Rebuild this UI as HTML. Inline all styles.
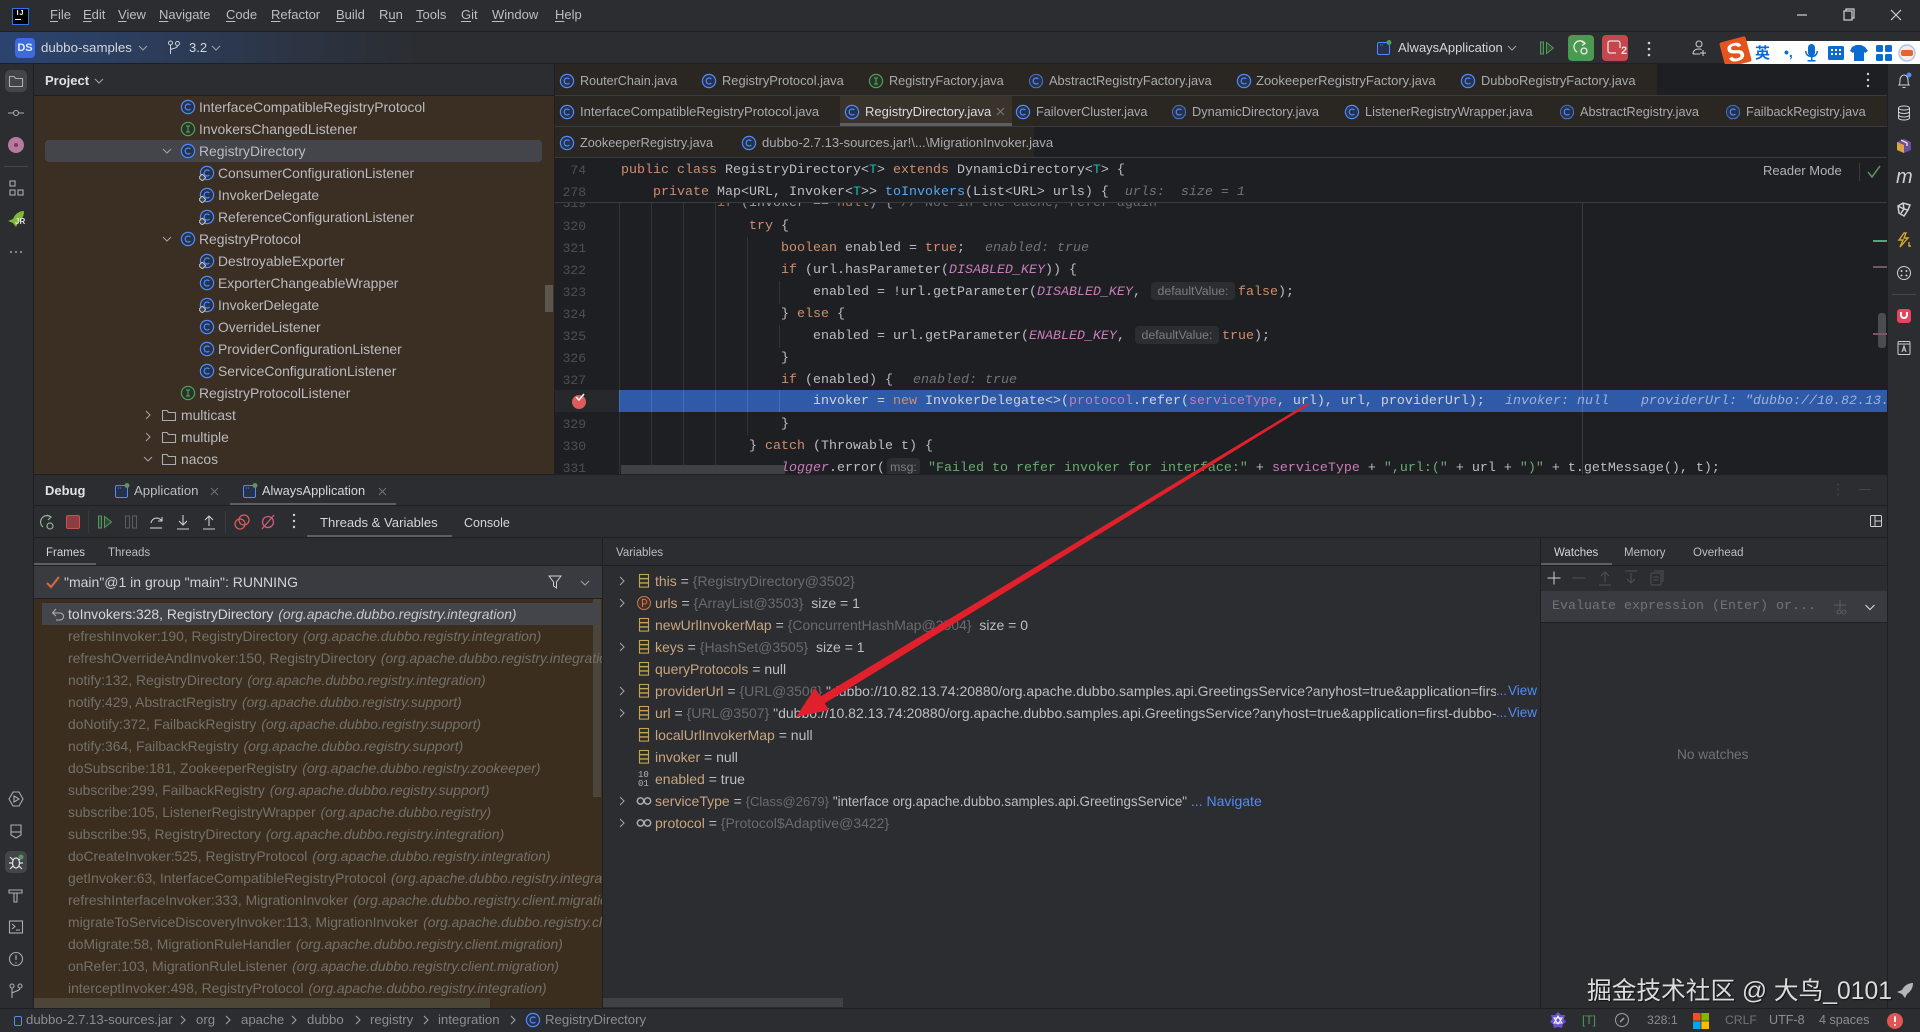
<!DOCTYPE html>
<html lang="en"><head><meta charset="utf-8"><title>dubbo-samples</title>
<style>
html,body{margin:0;padding:0;background:#2b2d30;}
#r{position:relative;width:1920px;height:1032px;overflow:hidden;background:#2b2d30;font-family:"Liberation Sans","Noto Sans CJK SC",sans-serif;font-size:13px;color:#bcbec4;}
.a{position:absolute;}
.t{position:absolute;white-space:pre;line-height:20px;height:20px;}
.m{position:absolute;white-space:pre;line-height:22px;height:22px;font-family:"Liberation Mono",monospace;font-size:13.33px;color:#bcbec4;margin-top:1px;}
.n{position:absolute;left:555px;width:31px;text-align:right;line-height:22px;height:22px;font-family:"Liberation Mono",monospace;font-size:13px;color:#4b5059;margin-top:1px;}
.g{position:absolute;top:203px;width:1px;height:271px;background:#313438;}
svg.i{position:absolute;width:16px;height:16px;overflow:visible;}
u{text-decoration:underline;text-underline-offset:2px;}
.k{color:#cf8e6d}.s{color:#6aab73}.p{color:#c77dbb}.pi{color:#c77dbb;font-style:italic}.f{color:#56a8f5}.h{color:#6f737a;font-style:italic}.tp{color:#16baac}
.tab{font-size:12.9px;color:#a9abb0;top:71px}
.tr{color:#b9bbc0;font-size:13.9px}
.fr{color:#747169;font-size:13.9px}.fr i{color:#747169;padding-left:1px}
.v{font-size:14px;color:#bcbec4}.v b{font-weight:normal;color:#c9a57f}.v em{font-style:normal;color:#686b72}
.lk{color:#548af7}
.inl{position:absolute;background:#2b2d30;border-radius:4px;color:#7a7d84;font-size:12.3px;line-height:18px;height:18px;text-align:center;white-space:pre;}
.b{color:#8b8d92;font-size:13.2px;top:1010px}
</style></head><body><div id="r">
<svg width="0" height="0" style="position:absolute"><defs>
<symbol id="c" viewBox="0 0 16 16"><circle cx="8" cy="8" r="6.6" fill="#25324d" stroke="#548af7" stroke-width="1.2"/><path d="M10.4 6a3 3 0 1 0 0 4" fill="none" stroke="#548af7" stroke-width="1.2"/></symbol>
<symbol id="cj" viewBox="0 0 16 16"><circle cx="8" cy="8" r="6.6" fill="#25324d" stroke="#548af7" stroke-width="1.2"/><path d="M10.4 6a3 3 0 1 0 0 4" fill="none" stroke="#548af7" stroke-width="1.2"/><rect x="0.8" y="10" width="5" height="5" rx="1" transform="rotate(45 3.3 12.5)" fill="#43454a" stroke="#ced0d6"/></symbol>
<symbol id="cg" viewBox="0 0 16 16"><path d="M3 4A6.6 6.6 0 0 1 14 5M14.6 8a6.6 6.6 0 0 1-12 4" fill="none" stroke="#548af7" stroke-width="1.2" stroke-dasharray="4 1.5"/><circle cx="8" cy="8" r="6.6" fill="#25324d" stroke="#4a6fb8" stroke-width="1"/><path d="M10.4 6a3 3 0 1 0 0 4" fill="none" stroke="#548af7" stroke-width="1.2"/></symbol>
<symbol id="ii" viewBox="0 0 16 16"><circle cx="8" cy="8" r="6.6" fill="#253627" stroke="#57965c" stroke-width="1.2"/><path d="M6 5h4M8 5v6M6 11h4" fill="none" stroke="#57965c" stroke-width="1.2"/></symbol>
<symbol id="fd" viewBox="0 0 16 16"><path d="M1.5 3.5h4.5l1.5 2h7v8h-13z" fill="none" stroke="#a8adb5" stroke-width="1.1"/></symbol>
<symbol id="cv" viewBox="0 0 16 16"><path d="M4 6l4 4 4-4" fill="none" stroke="#9da0a8" stroke-width="1.1"/></symbol>
<symbol id="cr" viewBox="0 0 16 16"><path d="M6 4l4 4-4 4" fill="none" stroke="#9da0a8" stroke-width="1.1"/></symbol>
<symbol id="fl" viewBox="0 0 16 16"><g fill="none" stroke="#c7a450" stroke-width="1.1"><rect x="3.5" y="1.5" width="9" height="4"/><rect x="3.5" y="5.8" width="9" height="4"/><rect x="3.5" y="10.1" width="9" height="4"/></g></symbol>
<symbol id="ob" viewBox="0 0 16 16"><g fill="none" stroke="#b0b3b9" stroke-width="1.4"><circle cx="4.5" cy="8" r="3.2"/><circle cx="11.5" cy="8" r="3.2"/></g></symbol>
<symbol id="run" viewBox="0 0 16 16"><rect x="1.5" y="2" width="3" height="12" fill="#2c4d33" stroke="#57965c"/><path d="M7.5 2.5v11l7-5.500z" fill="#2c4d33" stroke="#57965c"/></symbol>
<symbol id="app" viewBox="0 0 16 16"><rect x="1.500" y="2.500" width="12" height="12" rx="1.500" fill="#25324d" stroke="#548af7"/><path d="M4 5h1M6 5h1" stroke="#548af7"/><circle cx="13" cy="2.500" r="2.500" fill="#57965c"/></symbol>
</defs></svg>

<!-- title bar -->
<div class="a" style="left:0;top:31px;width:1920px;height:1px;background:#1e1f22"></div>
<div class="a" style="left:12px;top:8px;width:15px;height:15px;background:#000;border:1px solid #3574f0;color:#fff;font:bold 7px/9px 'Liberation Sans';text-align:center;box-sizing:content-box"><span style="letter-spacing:1px">IJ</span><div style="width:6px;height:1px;background:#fff;margin:1px 0 0 2px"></div></div>
<span class="t" style="left:50px;top:5px"><u>F</u>ile</span>
<span class="t" style="left:83px;top:5px"><u>E</u>dit</span>
<span class="t" style="left:118px;top:5px"><u>V</u>iew</span>
<span class="t" style="left:159px;top:5px"><u>N</u>avigate</span>
<span class="t" style="left:226px;top:5px"><u>C</u>ode</span>
<span class="t" style="left:271px;top:5px"><u>R</u>efactor</span>
<span class="t" style="left:336px;top:5px"><u>B</u>uild</span>
<span class="t" style="left:379px;top:5px">R<u>u</u>n</span>
<span class="t" style="left:416px;top:5px"><u>T</u>ools</span>
<span class="t" style="left:461px;top:5px"><u>G</u>it</span>
<span class="t" style="left:492px;top:5px"><u>W</u>indow</span>
<span class="t" style="left:555px;top:5px"><u>H</u>elp</span>
<svg class="a" style="left:1790px;top:5px" width="120" height="20"><g fill="none" stroke="#ced0d6" stroke-width="1.2"><path d="M7 10h10"/><rect x="54" y="6" width="8" height="9"/><path d="M56 6V4h8v9h-2"/><path d="M101 5l10 10M111 5l-10 10"/></g></svg>

<!-- toolbar -->
<div class="a" style="left:0;top:32px;width:1920px;height:32px;background:linear-gradient(90deg,#2b446f 0,#2c3e5e 130px,#2b2d30 420px)"></div>
<div class="a" style="left:0;top:63px;width:1920px;height:1px;background:#1e1f22"></div>
<div class="a" style="left:15px;top:38px;width:20px;height:20px;border-radius:4px;background:#3d6ae0;color:#e8ecf5;font:bold 11px/20px 'Liberation Sans';text-align:center">DS</div>
<span class="t" style="left:41px;top:38px;font-size:13.3px;color:#d4d6da">dubbo-samples</span>
<svg class="i" style="left:135px;top:40px"><use href="#cv"/></svg>
<svg class="i" style="left:166px;top:40px" viewBox="0 0 16 16"><g fill="none" stroke="#ced0d6"><circle cx="4.500" cy="3" r="2"/><circle cx="11.500" cy="3.500" r="2"/><path d="M4.500 5v9M11.500 5.500c0 3-5 3-7 4"/></g></svg>
<span class="t" style="left:189px;top:38px;color:#d4d6da">3.2</span>
<svg class="i" style="left:208px;top:40px"><use href="#cv"/></svg>
<svg class="i" style="left:1376px;top:40px"><use href="#app"/></svg>
<span class="t" style="left:1398px;top:38px;color:#d4d6da">AlwaysApplication</span>
<svg class="i" style="left:1504px;top:40px"><use href="#cv"/></svg>
<svg class="i" style="left:1539px;top:40px"><use href="#run"/></svg>
<div class="a" style="left:1568px;top:35px;width:26px;height:26px;border-radius:4px;background:#4a9a52"></div>
<svg class="i" style="left:1573px;top:40px" viewBox="0 0 16 16"><g fill="none" stroke="#e6efe6" stroke-width="1.300"><path d="M12 3.500A6 6 0 1 0 4 12"/><path d="M8 1l4 2.500-3 2"/><circle cx="11" cy="11" r="3"/></g></svg>
<div class="a" style="left:1602px;top:35px;width:26px;height:26px;border-radius:4px;background:#c4474d"></div>
<svg class="i" style="left:1607px;top:40px" viewBox="0 0 16 16"><rect x="1" y="1" width="12" height="12" rx="2" fill="none" stroke="#f0dcdc" stroke-width="1.300"/><rect x="9" y="8" width="8" height="9" fill="#c4474d"/></svg>
<span class="t" style="left:1621px;top:44px;font-size:11px;height:14px;line-height:14px;color:#f0e0e0;font-weight:bold">2</span>
<svg class="a" style="left:1645px;top:40px" width="8" height="18"><g fill="#ced0d6"><circle cx="4" cy="3" r="1.300"/><circle cx="4" cy="9" r="1.300"/><circle cx="4" cy="15" r="1.300"/></g></svg>
<svg class="i" style="left:1691px;top:40px" viewBox="0 0 16 16"><g fill="none" stroke="#ced0d6"><circle cx="8" cy="4" r="3"/><path d="M2 14c0-3 2-5 6-5 1 0 2 .2 2.500.6M2 14h7M12 10v6M9 13h6"/></g></svg>
<!-- IME -->
<div class="a" style="left:1740px;top:41px;width:180px;height:25px;background:#fff;border-radius:3px 0 0 3px"></div>
<div class="a" style="left:1722px;top:39px;width:27px;height:26px;background:#e5541d;transform:rotate(-15deg);border-radius:2px;color:#fff;font:bold 26px/26px 'Liberation Sans';text-align:center">S</div>
<span class="t" style="left:1755px;top:43px;color:#0b6bd0;font-size:15px;font-weight:bold;font-family:'Noto Sans CJK SC',sans-serif">英</span>
<span class="t" style="left:1784px;top:42px;color:#0b6bd0;font-size:14px;font-weight:bold">•,</span>
<svg class="a" style="left:1805px;top:44px" width="112" height="20"><g fill="#0b6bd0"><rect x="3" y="0" width="7" height="12" rx="3.500"/><path d="M0 7h1.500c0 3 2 4.500 5 4.500s5-1.500 5-4.500H13c0 4-2.500 6-5.500 6.200V16h3v1.500h-8V16h3.500v-2.800C3 13 0 11 0 7z"/><rect x="23" y="2" width="16" height="14" rx="1.500"/><path d="M47 3l4-2h5l4 2 3 4-3 2-1-1v9H49V8l-1 1-3-2z"/><rect x="71" y="1" width="7" height="7" rx="1.500"/><rect x="80" y="1" width="7" height="7" rx="1.500"/><rect x="71" y="10" width="7" height="7" rx="1.500"/><rect x="80" y="10" width="7" height="7" rx="1.500"/></g><g fill="#fff"><rect x="26" y="5" width="2" height="2"/><rect x="30" y="5" width="2" height="2"/><rect x="34" y="5" width="2" height="2"/><rect x="26" y="9" width="2" height="2"/><rect x="30" y="9" width="2" height="2"/><rect x="34" y="9" width="2" height="2"/></g><circle cx="102" cy="9" r="8" fill="#fde9e4" stroke="#a8c8ee" stroke-width="1.500"/><rect x="96" y="6" width="12" height="6" rx="2" fill="#e8622b"/></svg>

<!-- left stripe -->
<div class="a" style="left:33px;top:64px;width:1px;height:944px;background:#1e1f22"></div>
<div class="a" style="left:5px;top:70px;width:22px;height:22px;border-radius:5px;background:#43454a"></div>
<svg class="i" style="left:8px;top:73px"><use href="#fd"/></svg>
<svg class="i" style="left:8px;top:105px" viewBox="0 0 16 16"><g fill="none" stroke="#a8adb5" stroke-width="1.100"><circle cx="8" cy="8" r="2.500"/><path d="M0 8h5.500M10.500 8H16"/></g></svg>
<div class="a" style="left:8px;top:137px;width:16px;height:16px;border-radius:50%;background:#b57a9c"></div>
<div class="a" style="left:14px;top:143px;width:4px;height:4px;border-radius:50%;background:#7a3a5c"></div>
<div class="a" style="left:4px;top:166px;width:24px;height:1px;background:#43454a"></div>
<svg class="i" style="left:8px;top:180px" viewBox="0 0 16 16"><g fill="none" stroke="#a8adb5" stroke-width="1.100"><rect x="2" y="1" width="5" height="5"/><rect x="2" y="10" width="5" height="5"/><rect x="10" y="10" width="5" height="5"/></g></svg>
<svg class="a" style="left:7px;top:210px" width="20" height="20"><path d="M17 1c-5 0-9 3-11 8l-5 2 5 2 3 4 2-4c4-3 6-7 6-12z" fill="#7fb83b"/></svg>
<span class="t" style="left:15px;top:216px;font:bold 8px/12px 'Liberation Sans';height:12px;color:#e0e0e0">JR</span>
<svg class="a" style="left:9px;top:250px" width="14" height="4"><g fill="#8b8d92"><circle cx="2" cy="2" r="1.100"/><circle cx="7" cy="2" r="1.100"/><circle cx="12" cy="2" r="1.100"/></g></svg>
<svg class="i" style="left:8px;top:791px" viewBox="0 0 16 16"><g fill="none" stroke="#a8adb5" stroke-width="1.100"><path d="M5 1h6l4 7-4 7H5L1 8z"/><path d="M6 5l5 3-5 3z"/></g></svg>
<svg class="i" style="left:8px;top:823px" viewBox="0 0 16 16"><g fill="none" stroke="#a8adb5" stroke-width="1.100"><path d="M3 2h10v10l-5 3-5-3z"/><path d="M3 9h10"/></g></svg>
<div class="a" style="left:5px;top:851px;width:22px;height:22px;border-radius:5px;background:#43454a"></div>
<svg class="i" style="left:8px;top:854px" viewBox="0 0 16 16"><g fill="none" stroke="#dfe1e5" stroke-width="1.200"><ellipse cx="8" cy="9" rx="3.500" ry="5"/><path d="M1 9h3.500M11.500 9H15M2 3l3 3M14 3l-3 3M2 15l3-3M14 15l-3-3"/></g><circle cx="13" cy="3" r="2.500" fill="#57965c"/></svg>
<svg class="i" style="left:8px;top:887px" viewBox="0 0 16 16"><g fill="none" stroke="#a8adb5" stroke-width="1.100"><path d="M1 3h13v3H1zM6 6h3v9H6z"/></g></svg>
<svg class="i" style="left:8px;top:919px" viewBox="0 0 16 16"><g fill="none" stroke="#a8adb5" stroke-width="1.100"><rect x="1.500" y="2" width="13" height="12"/><path d="M4 5l3 2.500L4 10M8 11h4"/></g></svg>
<svg class="i" style="left:8px;top:951px" viewBox="0 0 16 16"><g fill="none" stroke="#a8adb5" stroke-width="1.100"><circle cx="8" cy="8" r="6.500"/><path d="M8 4v5M8 11v1.200"/></g></svg>
<svg class="i" style="left:8px;top:983px" viewBox="0 0 16 16"><g fill="none" stroke="#a8adb5" stroke-width="1.100"><circle cx="4" cy="3" r="2"/><circle cx="12" cy="3" r="2"/><path d="M4 5v10M12 5c0 3-5 3-8 5"/></g></svg>

<!-- project panel -->
<span class="t" style="left:45px;top:71px;font-weight:bold;color:#dfe1e5">Project</span>
<svg class="i" style="left:91px;top:73px"><use href="#cv"/></svg>
<div class="a" style="left:34px;top:95px;width:520px;height:1px;background:#1e1f22"></div>
<div class="a" style="left:34px;top:96px;width:520px;height:378px;background:#3b2e22;overflow:hidden">
  <div class="a" style="left:11px;top:44px;width:497px;height:22px;border-radius:4px;background:#43454a"></div>
  <div class="a" style="left:511px;top:189px;width:8px;height:27px;background:#5d564e"></div>
</div>
<svg class="i" style="left:180px;top:99px"><use href="#c"/></svg><span class="t tr" style="left:199px;top:97px">InterfaceCompatibleRegistryProtocol</span>
<svg class="i" style="left:180px;top:121px"><use href="#ii"/></svg><span class="t tr" style="left:199px;top:119px">InvokersChangedListener</span>
<svg class="i" style="left:159px;top:143px"><use href="#cv"/></svg><svg class="i" style="left:180px;top:143px"><use href="#c"/></svg><span class="t tr" style="left:199px;top:141px">RegistryDirectory</span>
<svg class="i" style="left:199px;top:165px"><use href="#cj"/></svg><span class="t tr" style="left:218px;top:163px">ConsumerConfigurationListener</span>
<svg class="i" style="left:199px;top:187px"><use href="#cj"/></svg><span class="t tr" style="left:218px;top:185px">InvokerDelegate</span>
<svg class="i" style="left:199px;top:209px"><use href="#cj"/></svg><span class="t tr" style="left:218px;top:207px">ReferenceConfigurationListener</span>
<svg class="i" style="left:159px;top:231px"><use href="#cv"/></svg><svg class="i" style="left:180px;top:231px"><use href="#c"/></svg><span class="t tr" style="left:199px;top:229px">RegistryProtocol</span>
<svg class="i" style="left:199px;top:253px"><use href="#cj"/></svg><span class="t tr" style="left:218px;top:251px">DestroyableExporter</span>
<svg class="i" style="left:199px;top:275px"><use href="#c"/></svg><span class="t tr" style="left:218px;top:273px">ExporterChangeableWrapper</span>
<svg class="i" style="left:199px;top:297px"><use href="#cj"/></svg><span class="t tr" style="left:218px;top:295px">InvokerDelegate</span>
<svg class="i" style="left:199px;top:319px"><use href="#c"/></svg><span class="t tr" style="left:218px;top:317px">OverrideListener</span>
<svg class="i" style="left:199px;top:341px"><use href="#c"/></svg><span class="t tr" style="left:218px;top:339px">ProviderConfigurationListener</span>
<svg class="i" style="left:199px;top:363px"><use href="#c"/></svg><span class="t tr" style="left:218px;top:361px">ServiceConfigurationListener</span>
<svg class="i" style="left:180px;top:385px"><use href="#ii"/></svg><span class="t tr" style="left:199px;top:383px">RegistryProtocolListener</span>
<svg class="i" style="left:140px;top:407px"><use href="#cr"/></svg><svg class="i" style="left:161px;top:407px"><use href="#fd"/></svg><span class="t tr" style="left:181px;top:405px">multicast</span>
<svg class="i" style="left:140px;top:429px"><use href="#cr"/></svg><svg class="i" style="left:161px;top:429px"><use href="#fd"/></svg><span class="t tr" style="left:181px;top:427px">multiple</span>
<svg class="i" style="left:140px;top:451px"><use href="#cv"/></svg><svg class="i" style="left:161px;top:451px"><use href="#fd"/></svg><span class="t tr" style="left:181px;top:449px">nacos</span>

<!-- editor tabs -->
<div class="a" style="left:554px;top:64px;width:1px;height:410px;background:#1e1f22"></div>
<div class="a" style="left:555px;top:64px;width:1332px;height:94px;background:#1e1f22"></div>
<div class="a" style="left:555px;top:64px;width:1102px;height:31px;background:#2a2622"></div>
<div class="a" style="left:555px;top:96px;width:1332px;height:30px;background:#2a2622"></div>
<div class="a" style="left:555px;top:127px;width:479px;height:30px;background:#2a2622"></div>
<div class="a" style="left:555px;top:95px;width:1332px;height:1px;background:#393b40"></div>
<div class="a" style="left:555px;top:126px;width:1332px;height:1px;background:#393b40"></div>
<div class="a" style="left:555px;top:157px;width:1332px;height:1px;background:#393b40"></div>
<div class="a" style="left:840px;top:96px;width:172px;height:30px;background:#39332c"></div>
<div class="a" style="left:840px;top:123px;width:172px;height:3px;background:#5d5f63"></div>
<svg class="i" style="left:559px;top:73px"><use href="#c"/></svg><span class="t tab" style="left:580px;font-size:12.6px">RouterChain.java</span>
<svg class="i" style="left:701px;top:73px"><use href="#c"/></svg><span class="t tab" style="left:722px">RegistryProtocol.java</span>
<svg class="i" style="left:868px;top:73px"><use href="#ii"/></svg><span class="t tab" style="left:889px;font-size:12.7px">RegistryFactory.java</span>
<svg class="i" style="left:1028px;top:73px"><use href="#cg"/></svg><span class="t tab" style="left:1049px;font-size:12.8px">AbstractRegistryFactory.java</span>
<svg class="i" style="left:1236px;top:73px"><use href="#c"/></svg><span class="t tab" style="left:1256px;font-size:13px">ZookeeperRegistryFactory.java</span>
<svg class="i" style="left:1460px;top:73px"><use href="#c"/></svg><span class="t tab" style="left:1481px">DubboRegistryFactory.java</span>
<svg class="a" style="left:1864px;top:71px" width="8" height="18"><g fill="#ced0d6"><circle cx="4" cy="3" r="1.200"/><circle cx="4" cy="9" r="1.200"/><circle cx="4" cy="15" r="1.200"/></g></svg>
<svg class="i" style="left:559px;top:104px"><use href="#c"/></svg><span class="t tab" style="left:580px;top:102px;font-size:13px">InterfaceCompatibleRegistryProtocol.java</span>
<svg class="i" style="left:844px;top:104px"><use href="#c"/></svg><span class="t tab" style="left:865px;top:102px;color:#d9dbe0;font-size:13px">RegistryDirectory.java</span>
<svg class="a" style="left:996px;top:107px" width="9" height="9"><path d="M1 1l7 7M8 1l-7 7" stroke="#7a7c82"/></svg>
<svg class="i" style="left:1015px;top:104px"><use href="#c"/></svg><span class="t tab" style="left:1036px;top:102px;font-size:12.7px">FailoverCluster.java</span>
<svg class="i" style="left:1171px;top:104px"><use href="#cg"/></svg><span class="t tab" style="left:1192px;top:102px;font-size:12.8px">DynamicDirectory.java</span>
<svg class="i" style="left:1344px;top:104px"><use href="#c"/></svg><span class="t tab" style="left:1365px;top:102px;font-size:12.8px">ListenerRegistryWrapper.java</span>
<svg class="i" style="left:1559px;top:104px"><use href="#cg"/></svg><span class="t tab" style="left:1580px;top:102px;font-size:12.7px">AbstractRegistry.java</span>
<svg class="i" style="left:1725px;top:104px"><use href="#cg"/></svg><span class="t tab" style="left:1746px;top:102px;font-size:12.7px">FailbackRegistry.java</span>
<svg class="i" style="left:559px;top:135px"><use href="#c"/></svg><span class="t tab" style="left:580px;top:133px;font-size:12.7px">ZookeeperRegistry.java</span>
<svg class="i" style="left:741px;top:135px"><use href="#c"/></svg><span class="t tab" style="left:762px;top:133px;font-size:13.1px">dubbo-2.7.13-sources.jar!\...\MigrationInvoker.java</span>

<!-- editor -->
<div class="a" style="left:555px;top:158px;width:1332px;height:316px;background:#1e1f22"></div>
<div class="a" style="left:555px;top:202px;width:1332px;height:1px;background:#393b40"></div>
<div class="g" style="left:619px"></div><div class="g" style="left:651px"></div><div class="g" style="left:683px"></div><div class="g" style="left:715px"></div>
<div class="a" style="left:747px;top:237px;width:1px;height:198px;background:#313438"></div>
<div class="a" style="left:779px;top:281px;width:1px;height:23px;background:#313438"></div>
<div class="a" style="left:779px;top:325px;width:1px;height:23px;background:#313438"></div>
<div class="a" style="left:1582px;top:203px;width:1px;height:271px;background:#393b40"></div>
<div class="a" style="left:619px;top:390px;width:1268px;height:22px;background:#2f5aa8"></div>
<div class="a" style="left:619px;top:390px;width:1px;height:22px;background:#4a6fb0"></div><div class="a" style="left:651px;top:390px;width:1px;height:22px;background:#4a6fb0"></div><div class="a" style="left:683px;top:390px;width:1px;height:22px;background:#4a6fb0"></div><div class="a" style="left:715px;top:390px;width:1px;height:22px;background:#4a6fb0"></div><div class="a" style="left:747px;top:390px;width:1px;height:22px;background:#4a6fb0"></div><div class="a" style="left:779px;top:390px;width:1px;height:22px;background:#4a6fb0"></div><div class="a" style="left:1582px;top:390px;width:1px;height:22px;background:#4a6fb0"></div>
<div class="a" style="left:555px;top:390px;width:64px;height:22px;background:#26282c"></div>

<span class="n" style="top:159px">74</span>
<span class="m" style="left:621px;top:159px"><span class="k">public class</span> RegistryDirectory&lt;<span class="tp">T</span>&gt; <span class="k">extends</span> DynamicDirectory&lt;<span class="tp">T</span>&gt; {</span>
<span class="n" style="top:181px">278</span>
<span class="m" style="left:653px;top:181px"><span class="k">private</span> Map&lt;URL, Invoker&lt;<span class="tp">T</span>&gt;&gt; <span class="f">toInvokers</span>(List&lt;URL&gt; urls) {  <span class="h">urls:  size = 1</span></span>

<div class="a" style="left:555px;top:203px;width:1332px;height:271px;overflow:hidden">
  <span class="n" style="left:0;top:-11px">319</span>
  <span class="m" style="left:162px;top:-11px;opacity:.8"><span class="k">if</span> (invoker == <span class="k">null</span>) { <span style="color:#7a7e85">// Not in the cache, refer again</span></span>
</div>
<span class="n" style="top:215px">320</span><span class="m" style="left:749px;top:215px"><span class="k">try</span> {</span>
<span class="n" style="top:237px">321</span><span class="m" style="left:781px;top:237px"><span class="k">boolean</span> enabled = <span class="k">true</span>;</span><span class="m h" style="left:985px;top:237px;color:#6f737a">enabled: true</span>
<span class="n" style="top:259px">322</span><span class="m" style="left:781px;top:259px"><span class="k">if</span> (url.hasParameter(<span class="pi">DISABLED_KEY</span>)) {</span>
<span class="n" style="top:281px">323</span><span class="m" style="left:813px;top:281px">enabled = !url.getParameter(<span class="pi">DISABLED_KEY</span>,</span><span class="inl" style="left:1151px;top:282px;width:84px">defaultValue:</span><span class="m k" style="left:1238px;top:281px;color:#cf8e6d">false<span style="color:#bcbec4">);</span></span>
<span class="n" style="top:303px">324</span><span class="m" style="left:781px;top:303px">} <span class="k">else</span> {</span>
<span class="n" style="top:325px">325</span><span class="m" style="left:813px;top:325px">enabled = url.getParameter(<span class="pi">ENABLED_KEY</span>,</span><span class="inl" style="left:1135px;top:326px;width:84px">defaultValue:</span><span class="m" style="left:1222px;top:325px"><span class="k">true</span>);</span>
<span class="n" style="top:347px">326</span><span class="m" style="left:781px;top:347px">}</span>
<span class="n" style="top:369px">327</span><span class="m" style="left:781px;top:369px"><span class="k">if</span> (enabled) {</span><span class="m h" style="left:913px;top:369px;color:#6f737a">enabled: true</span>
<svg class="a" style="left:571px;top:392px" width="18" height="18"><circle cx="8" cy="10" r="7" fill="#db5c5c"/><path d="M5 5l3 3 5-6" fill="none" stroke="#fff" stroke-width="1.500"/></svg>
<div class="a" style="left:619px;top:390px;width:1268px;height:22px;overflow:hidden">
  <span class="m" style="left:194px;top:0"><span style="color:#d0d3d8">invoker = </span><span class="k">new</span> <span style="color:#d0d3d8">InvokerDelegate&lt;&gt;(</span><span class="p">protocol</span><span style="color:#d0d3d8">.refer(</span><span class="p">serviceType</span><span style="color:#d0d3d8">, url), url, providerUrl);</span></span>
  <span class="m" style="left:886px;top:0;color:#9db3d8;font-style:italic">invoker: null</span>
  <span class="m" style="left:1022px;top:0;color:#9db3d8;font-style:italic">providerUrl: "dubbo://10.82.13.</span>
</div>
<span class="n" style="top:413px">329</span><span class="m" style="left:781px;top:413px">}</span>
<span class="n" style="top:435px">330</span><span class="m" style="left:749px;top:435px">} <span class="k">catch</span> (Throwable t) {</span>
<div class="a" style="left:621px;top:465px;width:164px;height:9px;background:#3f4144"></div>
<span class="n" style="top:457px">331</span><span class="m" style="left:781px;top:457px"><span class="pi">logger</span>.error(</span><span class="inl" style="left:887px;top:458px;width:33px">msg:</span><span class="m" style="left:928px;top:457px"><span class="s">"Failed to refer invoker for interface:"</span> + <span class="p">serviceType</span> + <span class="s">",url:("</span> + url + <span class="s">")"</span> + t.getMessage(), t);</span>

<span class="t" style="left:1763px;top:161px;color:#b0b2b8;font-size:13px">Reader Mode</span>
<div class="a" style="left:1859px;top:163px;width:1px;height:18px;background:#393b40"></div>
<svg class="i" style="left:1866px;top:164px" viewBox="0 0 16 16"><path d="M2 8l4 5 8-11" fill="none" stroke="#57965c" stroke-width="1.500"/></svg>
<div class="a" style="left:1873px;top:240px;width:14px;height:2px;background:#4eaa7a"></div>
<div class="a" style="left:1873px;top:266px;width:14px;height:2px;background:#6e5a64"></div>
<div class="a" style="left:1878px;top:313px;width:8px;height:35px;background:#4a4c50;border-radius:3px"></div>
<div class="a" style="left:1873px;top:333px;width:14px;height:2px;background:#7a5a60"></div>

<!-- right stripe -->
<div class="a" style="left:1887px;top:64px;width:33px;height:944px;background:#2b2d30;border-left:1px solid #1e1f22;box-sizing:border-box"></div>
<svg class="i" style="left:1896px;top:73px" viewBox="0 0 16 16"><g fill="none" stroke="#ced0d6"><path d="M3 12c1-1 1-3 1-5 0-3 2-5 4-5s4 2 4 5c0 2 0 4 1 5zM6.500 14.500h3"/></g><circle cx="13" cy="2" r="2.500" fill="#548af7"/></svg>
<svg class="i" style="left:1896px;top:105px" viewBox="0 0 16 16"><g fill="none" stroke="#ced0d6"><ellipse cx="8" cy="3" rx="5.500" ry="2"/><path d="M2.500 3v10c0 1 2.500 2 5.500 2s5.500-1 5.500-2V3M2.500 6.500c0 1 2.500 2 5.500 2s5.500-1 5.500-2M2.500 10c0 1 2.500 2 5.500 2s5.500-1 5.500-2"/></g></svg>
<svg class="i" style="left:1896px;top:137px" viewBox="0 0 16 16"><path d="M1 5l7-3 7 3v8l-7 3-7-3z" fill="#6a4fa0"/><path d="M1 5l7 3v8l-7-3z" fill="#d9a441"/><path d="M5 3l6 3v3" stroke="#e0d8c8" fill="none" stroke-width="1.500"/></svg>
<span class="t" style="left:1896px;top:167px;font:italic 20px/20px 'Liberation Sans';color:#ced0d6">m</span>
<svg class="i" style="left:1896px;top:201px" viewBox="0 0 16 16"><g fill="none" stroke="#ced0d6" stroke-width="1.500"><path d="M2 5l5-3 7 2-2 5-4 6-5-3z"/><path d="M7 2l1 6 4 1M2 5l6 3-3 4"/></g></svg>
<svg class="i" style="left:1896px;top:232px" viewBox="0 0 16 16"><g fill="none" stroke="#d4a72c" stroke-width="1.400"><path d="M8 1L3 8h4l-3 7 8-9H8l2-5zM13 10v4h2"/></g></svg>
<svg class="i" style="left:1896px;top:265px" viewBox="0 0 16 16"><circle cx="8" cy="8" r="6.500" fill="none" stroke="#ced0d6"/><g fill="#ced0d6"><circle cx="5.500" cy="6" r="1"/><circle cx="10.500" cy="6" r="1"/><circle cx="5.500" cy="10.500" r="1"/><circle cx="10.500" cy="10.500" r="1"/></g></svg>
<div class="a" style="left:1892px;top:294px;width:24px;height:1px;background:#43454a"></div>
<div class="a" style="left:1897px;top:309px;width:14px;height:14px;background:#e8435f;border-radius:3px"></div>
<svg class="a" style="left:1899px;top:311px" width="10" height="10"><path d="M2 1v3a3 3 0 0 0 6 0V1" fill="none" stroke="#fff" stroke-width="2"/></svg>
<svg class="i" style="left:1896px;top:340px" viewBox="0 0 16 16"><g fill="none" stroke="#ced0d6"><rect x="2" y="1.500" width="12" height="13" rx="1"/><path d="M2 4h12"/><path d="M6 12l2-6 2 6M6.800 10h2.400"/></g></svg>

<!-- debug panel -->
<div class="a" style="left:34px;top:474px;width:1853px;height:1px;background:#1e1f22"></div>
<span class="t" style="left:45px;top:481px;font-weight:bold;color:#dfe1e5">Debug</span>
<svg class="i" style="left:114px;top:483px"><use href="#app"/></svg><span class="t" style="left:134px;top:481px;font-size:13.2px">Application</span>
<svg class="a" style="left:210px;top:487px" width="9" height="9"><path d="M1 1l7 7M8 1l-7 7" stroke="#6f737a"/></svg>
<svg class="i" style="left:242px;top:483px"><use href="#app"/></svg><span class="t" style="left:262px;top:481px;font-size:12.8px;color:#d4d6da">AlwaysApplication</span>
<svg class="a" style="left:378px;top:487px" width="9" height="9"><path d="M1 1l7 7M8 1l-7 7" stroke="#6f737a"/></svg>
<div class="a" style="left:230px;top:503px;width:166px;height:2px;background:#5d5f63"></div>
<div class="a" style="left:34px;top:505px;width:1853px;height:1px;background:#1e1f22"></div>
<svg class="a" style="left:1835px;top:483px" width="50" height="14"><g fill="#43454a"><circle cx="3" cy="1.500" r="1"/><circle cx="3" cy="6.500" r="1"/><circle cx="3" cy="11.500" r="1"/><rect x="24" y="6" width="12" height="1"/></g></svg>
<svg class="i" style="left:39px;top:514px" viewBox="0 0 16 16"><g fill="none" stroke="#8fb58f" stroke-width="1.200"><path d="M12 3A6 6 0 1 0 4 13"/><path d="M8 1l4 2-3 3"/><circle cx="11" cy="12" r="3"/></g></svg>
<div class="a" style="left:66px;top:515px;width:12px;height:12px;background:#8c3d40;border:1px solid #c75450;border-radius:2px"></div>
<div class="a" style="left:88px;top:511px;width:1px;height:22px;background:#393b40"></div>
<svg class="i" style="left:97px;top:514px"><use href="#run"/></svg>
<svg class="i" style="left:123px;top:514px" viewBox="0 0 16 16"><g fill="none" stroke="#5a5d63"><rect x="2.500" y="2" width="4" height="12"/><rect x="9.500" y="2" width="4" height="12"/></g></svg>
<svg class="i" style="left:149px;top:514px" viewBox="0 0 16 16"><g fill="none" stroke="#ced0d6" stroke-width="1.100"><path d="M2 9c1-5 7-7 11-2M13 3v4h-4"/><path d="M1 14h12"/></g></svg>
<svg class="i" style="left:175px;top:514px" viewBox="0 0 16 16"><g fill="none" stroke="#ced0d6" stroke-width="1.100"><path d="M8 1v10M4 7l4 4 4-4M2 15h12"/></g></svg>
<svg class="i" style="left:201px;top:514px" viewBox="0 0 16 16"><g fill="none" stroke="#ced0d6" stroke-width="1.100"><path d="M8 12V2M4 6l4-4 4 4M2 15h12"/></g></svg>
<div class="a" style="left:225px;top:511px;width:1px;height:22px;background:#393b40"></div>
<svg class="i" style="left:234px;top:514px" viewBox="0 0 16 16"><g fill="none" stroke="#db5c5c" stroke-width="1.300"><circle cx="6" cy="10" r="5"/><circle cx="10" cy="6" r="5"/></g></svg>
<svg class="i" style="left:260px;top:514px" viewBox="0 0 16 16"><g fill="none" stroke="#c75c8e" stroke-width="1.300"><circle cx="8" cy="8" r="5.500"/><path d="M2 15L14 1" stroke="#db5c5c"/></g></svg>
<svg class="a" style="left:290px;top:513px" width="8" height="16"><g fill="#ced0d6"><circle cx="4" cy="2" r="1.200"/><circle cx="4" cy="8" r="1.200"/><circle cx="4" cy="14" r="1.200"/></g></svg>
<span class="t" style="left:320px;top:513px;color:#d4d6da;font-size:13.1px">Threads &amp; Variables</span>
<div class="a" style="left:307px;top:535px;width:145px;height:2px;background:#5d5f63"></div>
<span class="t" style="left:464px;top:513px;font-size:12.5px;color:#d4d6da">Console</span>
<svg class="i" style="left:1868px;top:513px" viewBox="0 0 16 16"><g fill="none" stroke="#ced0d6"><rect x="2.500" y="2.500" width="11" height="11" rx="1"/><path d="M7 2.500v11M7 8h6.500"/></g></svg>
<div class="a" style="left:34px;top:537px;width:1853px;height:1px;background:#1e1f22"></div>

<!-- frames -->
<div class="a" style="left:602px;top:538px;width:1px;height:470px;background:#1e1f22"></div>
<span class="t" style="left:46px;top:543px;font-size:11.500px;color:#d4d6da">Frames</span>
<span class="t" style="left:108px;top:543px;font-size:11.500px">Threads</span>
<div class="a" style="left:34px;top:563px;width:62px;height:2px;background:#5d5f63"></div>
<div class="a" style="left:34px;top:565px;width:568px;height:1px;background:#1e1f22"></div>
<div class="a" style="left:34px;top:566px;width:568px;height:32px;background:#393b40"></div>
<div class="a" style="left:34px;top:598px;width:568px;height:1px;background:#1e1f22"></div>
<svg class="i" style="left:45px;top:574px" viewBox="0 0 16 16"><path d="M2 9l4 4 8-10" fill="none" stroke="#d0693d" stroke-width="2.200"/></svg>
<span class="t" style="left:64px;top:572px;font-size:14px;color:#d0d2d6">"main"@1 in group "main": RUNNING</span>
<svg class="i" style="left:547px;top:574px" viewBox="0 0 16 16"><path d="M2 2h12L9.500 8v6l-3-2V8z" fill="none" stroke="#ced0d6"/></svg>
<svg class="i" style="left:577px;top:575px"><use href="#cv"/></svg>

<div class="a" style="left:34px;top:599px;width:568px;height:409px;background:#3b2e1f;overflow:hidden">
  <div class="a" style="left:559px;top:0;width:8px;height:198px;background:#4a463c"></div>
  <div class="a" style="left:8px;top:4px;width:558px;height:22px;background:#43454a"></div>
  <div class="a" style="left:0;top:399px;width:456px;height:10px;background:#4d4638"></div>
</div>
<div class="a" style="left:34px;top:599px;width:568px;height:399px;overflow:hidden">
<svg class="i" style="left:16px;top:7px" viewBox="0 0 16 16"><path d="M3 7h7a3.500 3.500 0 0 1 0 7H6M6 3L2.500 7 6 10" fill="none" stroke="#b0b2b8"/></svg>
<span class="t" style="left:34px;top:5px;color:#d4d6da;font-size:13.9px">toInvokers:328, RegistryDirectory <i style="color:#c6c8cd;padding-left:1px">(org.apache.dubbo.registry.integration)</i></span>
<span class="t fr" style="left:34px;top:27px">refreshInvoker:190, RegistryDirectory <i>(org.apache.dubbo.registry.integration)</i></span>
<span class="t fr" style="left:34px;top:49px">refreshOverrideAndInvoker:150, RegistryDirectory <i>(org.apache.dubbo.registry.integration)</i></span>
<span class="t fr" style="left:34px;top:71px">notify:132, RegistryDirectory <i>(org.apache.dubbo.registry.integration)</i></span>
<span class="t fr" style="left:34px;top:93px">notify:429, AbstractRegistry <i>(org.apache.dubbo.registry.support)</i></span>
<span class="t fr" style="left:34px;top:115px">doNotify:372, FailbackRegistry <i>(org.apache.dubbo.registry.support)</i></span>
<span class="t fr" style="left:34px;top:137px">notify:364, FailbackRegistry <i>(org.apache.dubbo.registry.support)</i></span>
<span class="t fr" style="left:34px;top:159px">doSubscribe:181, ZookeeperRegistry <i>(org.apache.dubbo.registry.zookeeper)</i></span>
<span class="t fr" style="left:34px;top:181px">subscribe:299, FailbackRegistry <i>(org.apache.dubbo.registry.support)</i></span>
<span class="t fr" style="left:34px;top:203px">subscribe:105, ListenerRegistryWrapper <i>(org.apache.dubbo.registry)</i></span>
<span class="t fr" style="left:34px;top:225px">subscribe:95, RegistryDirectory <i>(org.apache.dubbo.registry.integration)</i></span>
<span class="t fr" style="left:34px;top:247px">doCreateInvoker:525, RegistryProtocol <i>(org.apache.dubbo.registry.integration)</i></span>
<span class="t fr" style="left:34px;top:269px">getInvoker:63, InterfaceCompatibleRegistryProtocol <i>(org.apache.dubbo.registry.integration)</i></span>
<span class="t fr" style="left:34px;top:291px">refreshInterfaceInvoker:333, MigrationInvoker <i>(org.apache.dubbo.registry.client.migration)</i></span>
<span class="t fr" style="left:34px;top:313px">migrateToServiceDiscoveryInvoker:113, MigrationInvoker <i>(org.apache.dubbo.registry.client.migration)</i></span>
<span class="t fr" style="left:34px;top:335px">doMigrate:58, MigrationRuleHandler <i>(org.apache.dubbo.registry.client.migration)</i></span>
<span class="t fr" style="left:34px;top:357px">onRefer:103, MigrationRuleListener <i>(org.apache.dubbo.registry.client.migration)</i></span>
<span class="t fr" style="left:34px;top:379px">interceptInvoker:498, RegistryProtocol <i>(org.apache.dubbo.registry.integration)</i></span>
</div>
<div class="a" style="left:603px;top:998px;width:240px;height:9px;background:#3f4144"></div>

<!-- variables -->
<span class="t" style="left:616px;top:543px;font-size:11.500px">Variables</span>
<div class="a" style="left:603px;top:565px;width:937px;height:1px;background:#1e1f22"></div>
<svg class="i" style="left:614px;top:573px"><use href="#cr"/></svg><svg class="i" style="left:636px;top:573px"><use href="#fl"/></svg>
<span class="t v" style="left:655px;top:571px"><b>this</b> = <em>{RegistryDirectory@3502}</em></span>
<svg class="i" style="left:614px;top:595px"><use href="#cr"/></svg><svg class="i" style="left:636px;top:595px" viewBox="0 0 16 16"><circle cx="8" cy="8" r="6.500" fill="#4a2f24" stroke="#c77b50"/><path d="M6.500 12V4.500h2a2 2 0 0 1 0 4.500h-2" fill="none" stroke="#c77b50"/></svg>
<span class="t v" style="left:655px;top:593px"><b>urls</b> = <em>{ArrayList@3503}</em>  size = 1</span>
<svg class="i" style="left:636px;top:617px"><use href="#fl"/></svg>
<span class="t v" style="left:655px;top:615px"><b>newUrlInvokerMap</b> = <em>{ConcurrentHashMap@3504}</em>  size = 0</span>
<svg class="i" style="left:614px;top:639px"><use href="#cr"/></svg><svg class="i" style="left:636px;top:639px"><use href="#fl"/></svg>
<span class="t v" style="left:655px;top:637px"><b>keys</b> = <em>{HashSet@3505}</em>  size = 1</span>
<svg class="i" style="left:636px;top:661px"><use href="#fl"/></svg>
<span class="t v" style="left:655px;top:659px"><b>queryProtocols</b> = null</span>
<svg class="i" style="left:614px;top:683px"><use href="#cr"/></svg><svg class="i" style="left:636px;top:683px"><use href="#fl"/></svg>
<div class="a" style="left:655px;top:681px;width:841px;height:22px;overflow:hidden"><span class="t v" style="left:0;top:0"><b>providerUrl</b> = <em>{URL@3506}</em> "dubbo://10.82.13.74:20880/org.apache.dubbo.samples.api.GreetingsService?anyhost=true&amp;application=firs</span></div>
<span class="t lk" style="left:1496px;top:681px">...</span><span class="t lk" style="left:1508px;top:681px;font-size:13.5px">View</span>
<svg class="i" style="left:614px;top:705px"><use href="#cr"/></svg><svg class="i" style="left:636px;top:705px"><use href="#fl"/></svg>
<div class="a" style="left:655px;top:703px;width:841px;height:22px;overflow:hidden"><span class="t v" style="left:0;top:0"><b>url</b> = <em>{URL@3507}</em> "dubbo://10.82.13.74:20880/org.apache.dubbo.samples.api.GreetingsService?anyhost=true&amp;application=first-dubbo-</span></div>
<span class="t lk" style="left:1496px;top:703px">...</span><span class="t lk" style="left:1508px;top:703px;font-size:13.5px">View</span>
<svg class="i" style="left:636px;top:727px"><use href="#fl"/></svg>
<span class="t v" style="left:655px;top:725px"><b>localUrlInvokerMap</b> = null</span>
<svg class="i" style="left:636px;top:749px"><use href="#fl"/></svg>
<span class="t v" style="left:655px;top:747px"><b>invoker</b> = null</span>
<span class="a" style="left:638px;top:771px;font:9px/9px 'Liberation Mono',monospace;color:#b0b2b8;letter-spacing:0">10<br>01</span>
<span class="t v" style="left:655px;top:769px"><b>enabled</b> = true</span>
<svg class="i" style="left:614px;top:793px"><use href="#cr"/></svg><svg class="i" style="left:636px;top:793px"><use href="#ob"/></svg>
<span class="t v" style="left:655px;top:791px"><b>serviceType</b> = <em style="font-size:13px">{Class@2679}</em> <span style="font-size:13.4px">"interface org.apache.dubbo.samples.api.GreetingsService"</span> <span class="lk">... Navigate</span></span>
<svg class="i" style="left:614px;top:815px"><use href="#cr"/></svg><svg class="i" style="left:636px;top:815px"><use href="#ob"/></svg>
<span class="t v" style="left:655px;top:813px"><b>protocol</b> = <em>{Protocol$Adaptive@3422}</em></span>

<!-- watches -->
<div class="a" style="left:1540px;top:538px;width:1px;height:470px;background:#1e1f22"></div>
<span class="t" style="left:1554px;top:543px;font-size:11.500px;color:#d4d6da">Watches</span>
<span class="t" style="left:1624px;top:543px;font-size:11.500px">Memory</span>
<span class="t" style="left:1693px;top:543px;font-size:11.500px">Overhead</span>
<div class="a" style="left:1541px;top:563px;width:71px;height:2px;background:#5d5f63"></div>
<div class="a" style="left:1541px;top:565px;width:346px;height:1px;background:#1e1f22"></div>
<svg class="i" style="left:1546px;top:570px" viewBox="0 0 16 16"><path d="M8 1.500v13M1.500 8h13" stroke="#ced0d6" fill="none"/></svg>
<svg class="i" style="left:1571px;top:570px" viewBox="0 0 16 16"><path d="M1.500 8h13" stroke="#4e5157" fill="none"/></svg>
<svg class="i" style="left:1597px;top:570px" viewBox="0 0 16 16"><path d="M8 12V2M4 6l4-4 4 4M2 15h12" stroke="#4e5157" fill="none"/></svg>
<svg class="i" style="left:1623px;top:570px" viewBox="0 0 16 16"><path d="M8 3v10M4 9l4 4 4-4M2 1h12" stroke="#4e5157" fill="none"/></svg>
<svg class="i" style="left:1649px;top:570px" viewBox="0 0 16 16"><g stroke="#4e5157" fill="none"><rect x="2" y="3" width="10" height="12" rx="1"/><path d="M5 1h9v11M4.500 7h5M4.500 10h5"/></g></svg>
<div class="a" style="left:1541px;top:591px;width:346px;height:32px;background:#393b40;border-bottom:1px solid #1e1f22;box-sizing:border-box"></div>
<span class="t" style="left:1552px;top:597px;font-family:'Liberation Mono',monospace;font-size:13.330px;color:#6f737a">Evaluate expression (Enter) or...</span>
<svg class="i" style="left:1833px;top:599px" viewBox="0 0 16 16"><g stroke="#5a5d63" fill="none"><path d="M7 1v9M1 6h12"/><circle cx="6" cy="13" r="2"/><circle cx="11" cy="13" r="2"/></g></svg>
<svg class="i" style="left:1862px;top:599px" viewBox="0 0 16 16"><path d="M3.500 6l4.500 4.500L12.500 6" fill="none" stroke="#ced0d6" stroke-width="1.200"/></svg>
<span class="t" style="left:1677px;top:745px;font-size:13.7px;color:#6f737a">No watches</span>

<!-- status bar -->
<div class="a" style="left:0;top:1008px;width:1920px;height:24px;background:#2b2d30;border-top:1px solid #1e1f22;box-sizing:border-box"></div>
<div class="a" style="left:14px;top:1016px;width:6px;height:8px;border:1.500px solid #548af7;border-radius:2px"></div>
<span class="t b" style="left:26px">dubbo-2.7.13-sources.jar</span><svg class="i" style="left:175px;top:1012px"><use href="#cr"/></svg>
<span class="t b" style="left:196px">org</span><svg class="i" style="left:220px;top:1012px"><use href="#cr"/></svg>
<span class="t b" style="left:241px">apache</span><svg class="i" style="left:286px;top:1012px"><use href="#cr"/></svg>
<span class="t b" style="left:307px">dubbo</span><svg class="i" style="left:350px;top:1012px"><use href="#cr"/></svg>
<span class="t b" style="left:370px">registry</span><svg class="i" style="left:418px;top:1012px"><use href="#cr"/></svg>
<span class="t b" style="left:438px">integration</span><svg class="i" style="left:505px;top:1012px"><use href="#cr"/></svg>
<svg class="i" style="left:525px;top:1012px"><use href="#c"/></svg><span class="t b" style="left:545px">RegistryDirectory</span>
<svg class="i" style="left:1550px;top:1012px" viewBox="0 0 16 16"><path d="M8 0l3 3h4l-1 4 2 3-3 2-1 4-4-1-4 1-1-4-3-2 2-3-1-4h4z" fill="#6b52d6"/><path d="M4 6h8l-4 6zM8 4l4 7H4z" fill="none" stroke="#fff"/></svg>
<span class="t" style="left:1582px;top:1010px;font-size:12px;color:#57965c">[T]</span>
<svg class="i" style="left:1614px;top:1012px" viewBox="0 0 16 16"><circle cx="8" cy="8" r="6.500" fill="none" stroke="#9da0a8"/><path d="M6 10l4-4" stroke="#9da0a8" stroke-width="1.500"/></svg>
<span class="t b" style="left:1647px;font-size:12.3px">328:1</span>
<svg class="i" style="left:1693px;top:1013px" viewBox="0 0 14 14"><rect width="6.700" height="6.700" fill="#f25022"/><rect x="7.300" width="6.700" height="6.700" fill="#7fba00"/><rect y="7.300" width="6.700" height="6.700" fill="#00a4ef"/><rect x="7.300" y="7.300" width="6.700" height="6.700" fill="#ffb900"/></svg>
<span class="t b" style="left:1725px;color:#6f737a;font-size:12.2px">CRLF</span>
<span class="t b" style="left:1769px;font-size:12.6px">UTF-8</span>
<span class="t b" style="left:1819px;font-size:12.6px">4 spaces</span>
<svg class="i" style="left:1887px;top:1013px" viewBox="0 0 14 14"><circle cx="7" cy="7" r="7" fill="#e05555"/><path d="M7 3v5M7 9.800v1.400" stroke="#fff" stroke-width="1.700"/></svg>

<!-- watermark -->
<span class="t" style="left:1587px;top:977px;height:30px;line-height:30px;font-size:24.7px;color:#dcdcdc;text-shadow:1px 1px 1px #111;font-family:'Liberation Sans','Noto Sans CJK SC',sans-serif">掘金技术社区 @ 大鸟_0101</span>
<svg class="a" style="left:1896px;top:982px" width="20" height="18"><path d="M17 1c-5 0-9 3-11 7l-5 2 5 2 3 4 2-4c4-3 6-6 6-11z" fill="#b4b6ba"/></svg>

<!-- red arrow -->
<svg class="a" style="left:0;top:0;pointer-events:none" width="1920" height="1032"><polygon points="1308,403 1309,405 822,705 818,698" fill="#e2202c"/><polygon points="796,717 829,710 815,688" fill="#e2202c"/></svg>
</div></body></html>
